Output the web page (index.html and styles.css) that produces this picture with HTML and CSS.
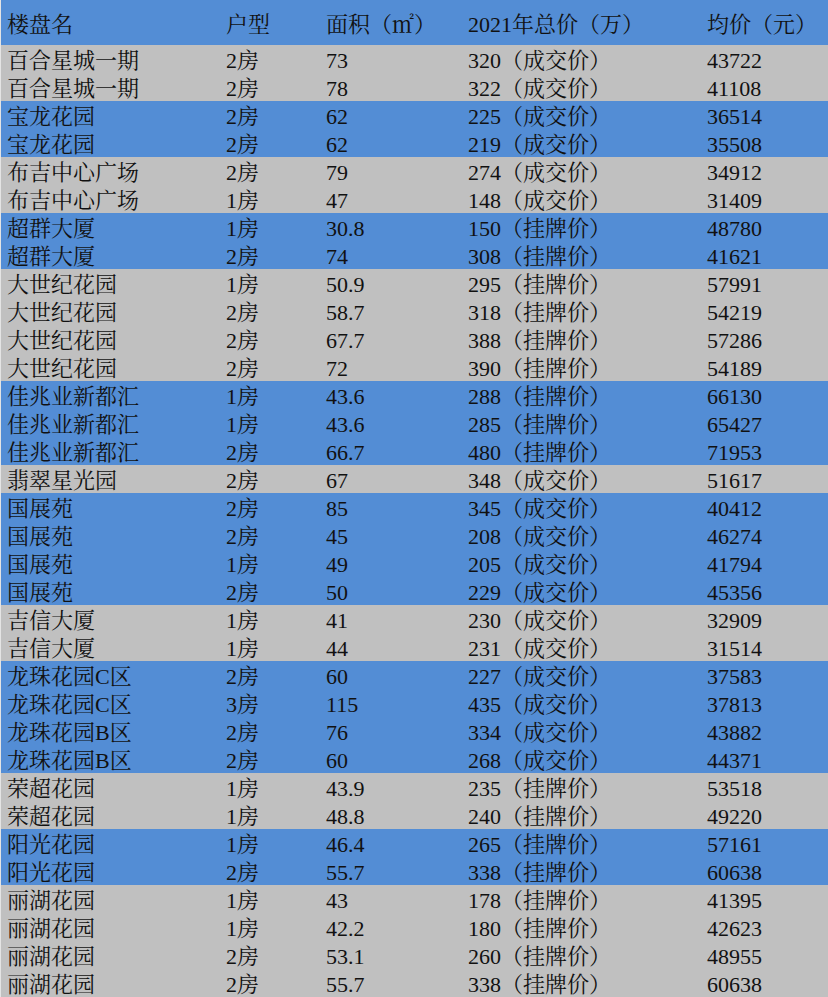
FILE: index.html
```html
<!DOCTYPE html>
<html lang="zh-CN">
<head>
<meta charset="utf-8">
<title>楼盘价格表</title>
<link rel="stylesheet" href="styles.css">
</head>
<body>
<div class="sheet">
  <div class="group blue head">
    <div class="row"><span>楼盘名</span><span>户型</span><span>面积（㎡）</span><span>2021年总价（万）</span><span>均价（元）</span></div>
  </div>
  <div class="group grey">
    <div class="row"><span>百合星城一期</span><span>2房</span><span>73</span><span>320（成交价）</span><span>43722</span></div>
    <div class="row"><span>百合星城一期</span><span>2房</span><span>78</span><span>322（成交价）</span><span>41108</span></div>
  </div>
  <div class="group blue">
    <div class="row"><span>宝龙花园</span><span>2房</span><span>62</span><span>225（成交价）</span><span>36514</span></div>
    <div class="row"><span>宝龙花园</span><span>2房</span><span>62</span><span>219（成交价）</span><span>35508</span></div>
  </div>
  <div class="group grey">
    <div class="row"><span>布吉中心广场</span><span>2房</span><span>79</span><span>274（成交价）</span><span>34912</span></div>
    <div class="row"><span>布吉中心广场</span><span>1房</span><span>47</span><span>148（成交价）</span><span>31409</span></div>
  </div>
  <div class="group blue">
    <div class="row"><span>超群大厦</span><span>1房</span><span>30.8</span><span>150（挂牌价）</span><span>48780</span></div>
    <div class="row"><span>超群大厦</span><span>2房</span><span>74</span><span>308（挂牌价）</span><span>41621</span></div>
  </div>
  <div class="group grey">
    <div class="row"><span>大世纪花园</span><span>1房</span><span>50.9</span><span>295（挂牌价）</span><span>57991</span></div>
    <div class="row"><span>大世纪花园</span><span>2房</span><span>58.7</span><span>318（挂牌价）</span><span>54219</span></div>
    <div class="row"><span>大世纪花园</span><span>2房</span><span>67.7</span><span>388（挂牌价）</span><span>57286</span></div>
    <div class="row"><span>大世纪花园</span><span>2房</span><span>72</span><span>390（挂牌价）</span><span>54189</span></div>
  </div>
  <div class="group blue">
    <div class="row"><span>佳兆业新都汇</span><span>1房</span><span>43.6</span><span>288（挂牌价）</span><span>66130</span></div>
    <div class="row"><span>佳兆业新都汇</span><span>1房</span><span>43.6</span><span>285（挂牌价）</span><span>65427</span></div>
    <div class="row"><span>佳兆业新都汇</span><span>2房</span><span>66.7</span><span>480（挂牌价）</span><span>71953</span></div>
  </div>
  <div class="group grey">
    <div class="row"><span>翡翠星光园</span><span>2房</span><span>67</span><span>348（成交价）</span><span>51617</span></div>
  </div>
  <div class="group blue">
    <div class="row"><span>国展苑</span><span>2房</span><span>85</span><span>345（成交价）</span><span>40412</span></div>
    <div class="row"><span>国展苑</span><span>2房</span><span>45</span><span>208（成交价）</span><span>46274</span></div>
    <div class="row"><span>国展苑</span><span>1房</span><span>49</span><span>205（成交价）</span><span>41794</span></div>
    <div class="row"><span>国展苑</span><span>2房</span><span>50</span><span>229（成交价）</span><span>45356</span></div>
  </div>
  <div class="group grey">
    <div class="row"><span>吉信大厦</span><span>1房</span><span>41</span><span>230（成交价）</span><span>32909</span></div>
    <div class="row"><span>吉信大厦</span><span>1房</span><span>44</span><span>231（成交价）</span><span>31514</span></div>
  </div>
  <div class="group blue">
    <div class="row"><span>龙珠花园C区</span><span>2房</span><span>60</span><span>227（成交价）</span><span>37583</span></div>
    <div class="row"><span>龙珠花园C区</span><span>3房</span><span>115</span><span>435（成交价）</span><span>37813</span></div>
    <div class="row"><span>龙珠花园B区</span><span>2房</span><span>76</span><span>334（成交价）</span><span>43882</span></div>
    <div class="row"><span>龙珠花园B区</span><span>2房</span><span>60</span><span>268（成交价）</span><span>44371</span></div>
  </div>
  <div class="group grey">
    <div class="row"><span>荣超花园</span><span>1房</span><span>43.9</span><span>235（挂牌价）</span><span>53518</span></div>
    <div class="row"><span>荣超花园</span><span>1房</span><span>48.8</span><span>240（挂牌价）</span><span>49220</span></div>
  </div>
  <div class="group blue">
    <div class="row"><span>阳光花园</span><span>1房</span><span>46.4</span><span>265（挂牌价）</span><span>57161</span></div>
    <div class="row"><span>阳光花园</span><span>2房</span><span>55.7</span><span>338（挂牌价）</span><span>60638</span></div>
  </div>
  <div class="group grey">
    <div class="row"><span>丽湖花园</span><span>1房</span><span>43</span><span>178（挂牌价）</span><span>41395</span></div>
    <div class="row"><span>丽湖花园</span><span>1房</span><span>42.2</span><span>180（挂牌价）</span><span>42623</span></div>
    <div class="row"><span>丽湖花园</span><span>2房</span><span>53.1</span><span>260（挂牌价）</span><span>48955</span></div>
    <div class="row"><span>丽湖花园</span><span>2房</span><span>55.7</span><span>338（挂牌价）</span><span>60638</span></div>
  </div>
</div>
</body>
</html>
```
FILE: styles.css
```css
html, body {
  margin: 0;
  padding: 0;
  background: #ffffff;
}
.sheet {
  width: 828px;
  font-family: "Liberation Serif", "Noto Serif CJK SC", "Noto Sans CJK SC", serif;
  font-size: 22px;
  color: #111111;
  border-left: 1px solid #e4e4e4;
  box-sizing: border-box;
}
.group.blue {
  background: #538dd5;
}
.group.grey {
  background: #c0c0c0;
}
.row {
  display: grid;
  grid-template-columns: 219px 100px 142px 239px 1fr;
  padding-left: 6px;
  height: 28px;
  line-height: 28px;
  box-sizing: border-box;
  padding-top: 2px;
  white-space: nowrap;
  overflow: hidden;
}
.head .row {
  height: 45px;
  line-height: 45px;
  padding-top: 2px;
}
```
